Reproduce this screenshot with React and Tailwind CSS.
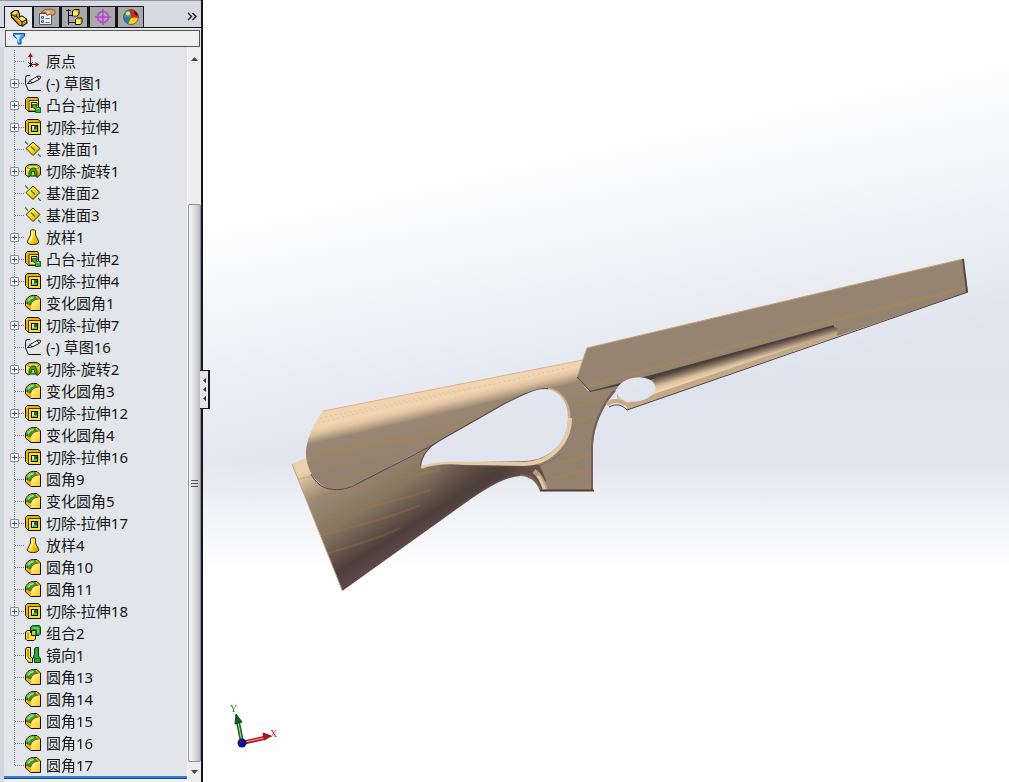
import { useState } from "react";

const FEATURES = [
  { name: "原点", icon: "origin" },
  { name: "(-) 草图1", icon: "sketch", children: true },
  { name: "凸台-拉伸1", icon: "boss", children: true },
  { name: "切除-拉伸2", icon: "cut", children: true },
  { name: "基准面1", icon: "plane" },
  { name: "切除-旋转1", icon: "revolve", children: true },
  { name: "基准面2", icon: "plane" },
  { name: "基准面3", icon: "plane" },
  { name: "放样1", icon: "loft", children: true },
  { name: "凸台-拉伸2", icon: "boss", children: true },
  { name: "切除-拉伸4", icon: "cut", children: true },
  { name: "变化圆角1", icon: "fillet" },
  { name: "切除-拉伸7", icon: "cut", children: true },
  { name: "(-) 草图16", icon: "sketch" },
  { name: "切除-旋转2", icon: "revolve", children: true },
  { name: "变化圆角3", icon: "fillet" },
  { name: "切除-拉伸12", icon: "cut", children: true },
  { name: "变化圆角4", icon: "fillet" },
  { name: "切除-拉伸16", icon: "cut", children: true },
  { name: "圆角9", icon: "fillet" },
  { name: "变化圆角5", icon: "fillet" },
  { name: "切除-拉伸17", icon: "cut", children: true },
  { name: "放样4", icon: "loft" },
  { name: "圆角10", icon: "fillet" },
  { name: "圆角11", icon: "fillet" },
  { name: "切除-拉伸18", icon: "cut", children: true },
  { name: "组合2", icon: "combine" },
  { name: "镜向1", icon: "mirror" },
  { name: "圆角13", icon: "fillet" },
  { name: "圆角14", icon: "fillet" },
  { name: "圆角15", icon: "fillet" },
  { name: "圆角16", icon: "fillet" },
  { name: "圆角17", icon: "fillet" },
];

const ICONS = {
  origin: (
    <>
      <path d="M5.500 3v8.500h8" fill="none" stroke="#a01018" />
      <path d="M5.500 0 8 4H3zM14 11.500 10.500 9v5z" fill="#a01018" />
      <path d="m3 9 5 5M8 9l-5 5M5.500 9v5" stroke="#111" />
    </>
  ),
  sketch: (
    <>
      <path d="M5 .5H1.500L.5 3v6l3 6.500H16" fill="none" stroke="#111" />
      <path d="m2.500 8.500 2.500-3 8-4.500 2.500.5-.5 2.500-8 4z" fill="#f7f7f7" stroke="#111" />
      <path d="m5 5.500 2 2.500M12 1.500l2 2.500" stroke="#111" />
    </>
  ),
  boss: (
    <>
      <path d="M.5 2.500 2.500.5h10l1 2v12h-10l-3-3z" fill="#eeb600" stroke="#111" />
      <path d="M4 3.500h9.500V14H4z" fill="#ffe75e" stroke="#111" strokeWidth=".8" />
      <path d="M6.500 11V5.500H12V9" fill="#fff8c0" stroke="#111" />
      <path d="M7.500 7.500h4v3h4v5h-5V12l-3-1.500z" fill="#3aad42" stroke="#064d0b" strokeWidth=".8" />
      <path d="M11.500 11.500h3" stroke="#a4e79e" />
    </>
  ),
  cut: (
    <>
      <path d="M.5 2.500 2.500.5H13l2.500 2v13h-12l-3-3z" fill="#eeb600" stroke="#111" />
      <path d="M3.500 15V3.500H15" fill="none" stroke="#111" strokeWidth=".8" />
      <path d="M4 4h11v11H4z" fill="#ffde2c" />
      <path d="M6.500 6.500h6v6h-6z" fill="#fff9bd" stroke="#111" strokeWidth="1.200" />
      <path d="M9 7h3v3H9z" fill="#18732a" />
      <path d="M7 12 9 10h3v2z" fill="#52bf55" />
    </>
  ),
  plane: (
    <>
      <path d="m8 1 7 6.500-7 7-7-7z" fill="url(#yellow)" stroke="#3a2c00" />
      <path d="m0 .5 3 3M6 5.500l4 4M13 13l3 3" stroke="#15802a" strokeWidth="1.200" />
    </>
  ),
  revolve: (
    <>
      <path d="M.5 5C.5 0 15.500 0 15.500 5v6.500l-3 2.500-2-1h-5l-2 1-3-2.500z" fill="url(#yellow)" stroke="#111" />
      <path d="M2 4.500c1-3 11-3 12 0L11 6H5z" fill="#ffe75e" stroke="#6b5000" strokeWidth=".7" />
      <path d="M4 14V9l2.500-4H10l2 4v5.500L9.500 11V8.500h-3V11z" fill="#2eaa38" stroke="#064d0b" strokeWidth=".9" />
    </>
  ),
  loft: (
    <>
      <path d="M5.500 1.500c1.500-1 3.500-1 5 0V6l3.500 7-2 1.800c-2.500 1.200-5.500 1.200-8 0L2 13l3.500-7z" fill="url(#yellow)" stroke="#3a2c00" />
      <path d="M7 2.500V7l-2.500 6" stroke="#fff8c0" strokeWidth="1.500" fill="none" />
    </>
  ),
  fillet: (
    <>
      <path d="M.5 7C1 3.500 4 .5 8.500.5H12L15.500 4v11.500H6L.5 11z" fill="#f7b900" stroke="#111" />
      <path d="M6 15V10c1-3 4-5.500 9-5.500V15z" fill="url(#face)" />
      <path d="M1 8C2 4 5 1 10.500 1L12 3.500C8.500 4 6.500 6 5.500 9.500z" fill="#2d9b39" />
      <path d="M3 6.500C4 4.500 6 3 8.500 2.500" stroke="#a4e79e" strokeWidth="1.500" fill="none" />
      <path d="M1 8l4.500 2C6.500 6.500 9.500 4 13.500 4" stroke="#3a2c00" strokeWidth=".8" fill="none" />
    </>
  ),
  combine: (
    <>
      <path d="m5.500 2.500 2-2h7l1 2V9l-1.500 1.500H5.500z" fill="#2fa23a" stroke="#063f0c" />
      <path d="M7.500 3h5.500V8" fill="none" stroke="#9be39a" />
      <path d="m.5 7 2-1.500h3v2h5v6.500l-1.500 1.500H2L.5 14z" fill="#ffe03a" stroke="#111" />
      <path d="M6.500 5.500h4.500v5H6.500z" fill="#b7d44e" stroke="#111" />
      <path d="M3 7.500V14" stroke="#a67d00" />
    </>
  ),
  mirror: (
    <>
      <path d="M.5 1.500 2 .5h3.500V10l2 1v4.500h-4l-1-2-2-2z" fill="#ffe03a" stroke="#111" />
      <path d="M9.500 1.500 11 .5h2.500V9l2 2.500v4h-6V12l-1-1V9l1-1z" fill="#28aa3a" stroke="#063f0c" />
      <path d="M3 2v8.500l3 2M9.500 11.500h5" stroke="#5c4600" strokeWidth=".8" fill="none" />
    </>
  ),
};

function FeatureIcon({ name }) {
  return (
    <svg viewBox="0 0 16 16" className="size-4 shrink-0" aria-hidden="true">
      {ICONS[name]}
    </svg>
  );
}

const TABS = [
  {
    id: "tree",
    label: "FeatureManager",
    art: (
      <>
        <path d="M1 4 4.500 1.500H8L9.500 5v3L12 7l4.500 3 .5 4-4.500 3L9 16 1.500 8z" fill="#e5ae00" stroke="#111" strokeWidth="1.200" />
        <path d="M2.500 4 5 2.500h2L6 5H3.500zM8.500 9.500l3.500-2 3.500 2.500-3 2z" fill="#fff05c" />
        <path d="m2 6 5 2 5 5v3M6 5l1 3M12 13l4-2" stroke="#111" fill="none" />
      </>
    ),
  },
  {
    id: "props",
    label: "PropertyManager",
    art: (
      <>
        <path d="M1.500 5.500h12v11h-12z" fill="#eef1f7" stroke="#555" />
        <path d="M3.500 8.500h2v2h-2zM3.500 12.500h2v2h-2z" fill="#9fc0ee" stroke="#3d63a8" />
        <path d="M7.500 10.500H12M7.500 14.500H12" stroke="#777" />
        <path d="m3 4.500 4-3 6-.5 4 1.500V6l-3 1.500-2-1.500-3 1.500L8 5z" fill="#d9a06c" stroke="#75451e" strokeWidth=".8" />
        <path d="M8 3.500 12 3M9 5l3-.5" stroke="#f6cfa6" />
      </>
    ),
  },
  {
    id: "config",
    label: "ConfigurationManager",
    art: (
      <>
        <path d="M2.500 1v16M2.500 7.500H6M2.500 14.500H9M0 2.500h5" stroke="#111" fill="none" />
        <path d="m6.500 3 1.500-1.500h5v4.500l-1.500 2h-5zM9.500 11.500l1.500-1.500h5v4.500l-1.500 2h-5z" fill="#ffc800" stroke="#111" />
        <path d="M7 3.500h4v4H7zM10 12h4v4h-4z" fill="#fff06a" />
      </>
    ),
  },
  {
    id: "dimx",
    label: "DimXpertManager",
    art: (
      <g fill="none" stroke="#b845d8" strokeWidth="1.500">
        <circle cx="9" cy="9" r="5.500" />
        <path d="M9 1v16M1 9h16" />
      </g>
    ),
  },
  {
    id: "display",
    label: "DisplayManager",
    art: (
      <>
        <circle cx="9" cy="9" r="7.500" fill="#e32219" />
        <path d="M9 10 1.600 9A7.500 7.500 0 0 1 7 1.800C9 4 9.500 7 9 10" fill="#3fa746" />
        <path d="M9 10 1.600 9A7.500 7.500 0 0 0 6 15.800z" fill="#2375d8" />
        <path d="M9 10c3-1 5-1 7.400 0A7.500 7.500 0 0 1 6 15.800z" fill="#f8d41b" />
        <path d="M7 1.800C12 1 16 4 16.400 10c-2-1-5-1-7.400 0 .5-3 0-6-2-8.200" fill="#df241c" />
        <path d="M12 3c3 1 4 3 3.500 5.500-2-1-3.500-3-3.500-5.500" fill="#4c0c0a" />
        <circle cx="6" cy="5.500" r="2" fill="#fff" opacity=".75" />
        <circle cx="9" cy="9" r="7.500" fill="none" stroke="#555" strokeWidth=".8" />
      </>
    ),
  },
];

function ManagerTabs() {
  const [active, setActive] = useState("tree");

  return (
    <div className="flex h-7 items-end border-t border-b border-t-[#8c97ad] border-b-[#15171c] bg-[#d6dae0] pl-1">
      <div className="-mb-px flex" role="tablist">
        {TABS.map((tab) => (
          <button
            key={tab.id}
            type="button"
            role="tab"
            aria-label={tab.label}
            aria-selected={active === tab.id}
            onClick={() => setActive(tab.id)}
            className={
              active === tab.id
                ? "flex h-[22px] w-7 items-center justify-center border-t border-l border-[#15171c] bg-[#e6e9ec]"
                : "flex h-[22px] w-7 items-center justify-center border border-l-2 border-[#15171c] bg-[#a9a9ab]"
            }
          >
            <svg viewBox="0 0 18 18" className="size-[18px]" aria-hidden="true">
              {tab.art}
            </svg>
          </button>
        ))}
      </div>
      <button type="button" aria-label="更多" className="mr-px mb-[3px] ml-auto flex size-4 items-center justify-center">
        <svg viewBox="0 0 10 9" className="h-[9px] w-[10px]" fill="none" stroke="#1b1b1b" strokeWidth="1.400">
          <path d="m1 1 3.500 3.500L1 8M5.500 1 9 4.500 5.500 8" />
        </svg>
      </button>
    </div>
  );
}

function FilterBox() {
  return (
    <label className="mt-[2px] mr-px ml-[5px] flex h-[17px] items-center border border-[#555] bg-[#efefef] pl-[7px]">
      <svg viewBox="0 0 12 12" className="size-3 shrink-0" aria-hidden="true">
        <path d="M.5.5h11V3L8 6.500V11H5V6.500L.5 3z" fill="#3da5f0" stroke="#1149b5" />
        <path d="M2 2h6L6 5.500V10" fill="#c5ecff" />
      </svg>
      <input aria-label="过滤器" className="h-full w-full min-w-0 bg-transparent px-1 text-xs outline-none" />
    </label>
  );
}

function TreeRow({ item, last }) {
  const [open, setOpen] = useState(false);

  return (
    <li className="flex h-[22px] items-center">
      <div className="relative h-[22px] w-5 shrink-0">
        <svg viewBox="0 0 20 22" className="block h-[22px] w-5" stroke="#777" strokeDasharray="1 1" aria-hidden="true">
          <path d={last ? "M9.500 0v11" : "M9.500 0v22"} />
          <path d="M10 11.500h10" />
        </svg>
        {item.children && (
          <button
            type="button"
            aria-label={"展开 " + item.name}
            aria-expanded={open}
            onClick={() => setOpen(!open)}
            className="absolute top-[7px] left-[5px] flex size-[9px] items-center justify-center rounded-[1px] border border-[#929292] bg-[#f7f8f9]"
          >
            <svg viewBox="0 0 5 5" className="size-[5px]" stroke="#3a559f">
              <path d={open ? "M0 2.500h5" : "M0 2.500h5M2.500 0v5"} />
            </svg>
          </button>
        )}
      </div>
      <FeatureIcon name={item.icon} />
      <span className="ml-[5px] whitespace-nowrap">{item.name}</span>
    </li>
  );
}

function ScrollBar() {
  return (
    <div className="flex w-[14px] shrink-0 flex-col border-l border-[#fafafa] bg-[#ededee]">
      <button type="button" aria-label="向上滚动" className="flex h-6 items-center justify-center">
        <svg viewBox="0 0 7 4" className="h-1 w-[7px]">
          <path d="M0 4h7L3.500 0z" fill="#444" />
        </svg>
      </button>
      <div className="h-[133px] shrink-0" />
      <div className="flex flex-1 items-center justify-center rounded-xs border border-[#8f9092] bg-linear-to-r from-[#f7f7f7] via-[#dcdcde] to-[#b9babf]">
        <svg viewBox="0 0 7 8" className="h-2 w-[7px]" stroke="#555">
          <path d="M0 1.500h7M0 4.500h7M0 7.500h7" />
        </svg>
      </div>
      <button type="button" aria-label="向下滚动" className="flex h-5 items-center justify-center">
        <svg viewBox="0 0 7 4" className="h-1 w-[7px]">
          <path d="M0 0h7L3.500 4z" fill="#444" />
        </svg>
      </button>
    </div>
  );
}

function FeaturePanel() {
  return (
    <aside className="relative flex w-[203px] shrink-0 flex-col border-r-2 border-[#15161c] bg-[#e2e6ea]">
      <ManagerTabs />
      <FilterBox />
      <div className="flex flex-1">
        <div className="w-1 shrink-0 bg-[#d2d6dd]" />
        <div className="flex min-w-0 flex-1 flex-col">
          <ul className="flex-1 pt-[3px] pl-px text-[15px] text-[#151515]">
            {FEATURES.map((item, i) => (
              <TreeRow key={item.name} item={item} last={i === FEATURES.length - 1} />
            ))}
          </ul>
          <div className="h-[3px] border-b border-[#33435c] bg-[#2d7fe0]" />
          <div className="h-[3px] bg-[#eef0f3]" />
        </div>
        <ScrollBar />
      </div>
      <button
        type="button"
        aria-label="收起面板"
        className="absolute top-[370px] -right-[9px] flex h-[39px] w-[10px] flex-col items-center justify-center gap-1 border border-r-2 border-l-0 border-[#15161c] bg-[#e2e6ea]"
      >
        {[0, 1, 2].map((n) => (
          <svg key={n} viewBox="0 0 3 5" className="h-[5px] w-[3px]">
            <path d="M3 0v5L0 2.500z" fill="#333" />
          </svg>
        ))}
      </button>
    </aside>
  );
}

function Triad() {
  return (
    <g>
      <path d="m242 742-4-20" stroke="#17691f" strokeWidth="4" />
      <path d="m242 742-4-20" stroke="#a9d8ac" strokeWidth="1" />
      <path d="m236 714 6 8-7 2z" fill="#17601d" stroke="#0d4412" />
      <path d="m242 743 22-5" stroke="#b3161c" strokeWidth="4" />
      <path d="m245 742 19-4" stroke="#f2b0b0" strokeWidth="1" />
      <path d="m271 736-8-3 1.500 7z" fill="#b3161c" stroke="#8c0f14" />
      <circle cx="242" cy="743" r="4.500" fill="#11118c" />
      <text x="230" y="712" fontSize="10" fill="#158a1d" fontFamily="Liberation Serif, serif">
        Y
      </text>
      <text x="270" y="737" fontSize="10" fill="#ee1c24" fontFamily="Liberation Serif, serif">
        X
      </text>
    </g>
  );
}

const CHEEK =
  "M323 411 583 360 577 377 588 391 616 386 616 391C603 406 594 425 593 445L592 470 593 491H541C538 480 532 475 522 475L421 466 425 449C395 462 370 480 355 485C345 490 337 490 330 489C315 484 305 469 306 450C308 434 316 420 323 411Z";
const BUTT =
  "M292 464 306 458C308 473 317 486 330 489C340 491 350 488 357 484L427 448 450 461 530 462 540 466 546 480 541 491C537 479 530 474 520 475C500 478 485 489 472 497L342 590Z";
const GRIP_HOLE =
  "M421 466C423 455 428 448 440 441L505 404C520 397 533 389 545 389C559 390 568 401 568 418C568 441 551 460 525 461L465 462C445 461 431 463 421 466Z";

function Model() {
  return (
    <svg
      viewBox="203 0 806 782"
      preserveAspectRatio="xMinYMin meet"
      className="block h-auto w-full"
      role="img"
      aria-label="木质枪托模型"
    >
      <defs>
        <linearGradient id="yellow" x1="0" y1="0" x2="1" y2="1">
          <stop offset="0" stopColor="#fff49a" />
          <stop offset=".5" stopColor="#ffda22" />
          <stop offset="1" stopColor="#c38c00" />
        </linearGradient>
        <linearGradient id="face" x1="0" y1="0" x2="1" y2="1">
          <stop offset="0" stopColor="#fff9b8" />
          <stop offset="1" stopColor="#ffc70c" />
        </linearGradient>
        <linearGradient id="cheek" gradientUnits="userSpaceOnUse" x1="440" y1="387" x2="453" y2="443">
          <stop offset="0" stopColor="#f0d4b1" />
          <stop offset=".2" stopColor="#f1d5b3" />
          <stop offset=".3" stopColor="#dfc3a1" />
          <stop offset=".46" stopColor="#9a8773" />
          <stop offset="1" stopColor="#938270" />
        </linearGradient>
        <linearGradient id="butt" gradientUnits="userSpaceOnUse" x1="340" y1="450" x2="402" y2="548">
          <stop offset="0" stopColor="#ead0ad" />
          <stop offset=".14" stopColor="#b9a287" />
          <stop offset=".26" stopColor="#9a8874" />
          <stop offset=".55" stopColor="#86755f" />
          <stop offset=".72" stopColor="#695a4e" />
          <stop offset=".88" stopColor="#4c3f3a" />
          <stop offset="1" stopColor="#5e4747" />
        </linearGradient>
        <linearGradient id="neck" gradientUnits="userSpaceOnUse" x1="435" y1="0" x2="546" y2="0">
          <stop offset="0" stopColor="#4c3e38" stopOpacity="0" />
          <stop offset=".6" stopColor="#4c3e38" stopOpacity=".6" />
          <stop offset="1" stopColor="#7b6a5a" stopOpacity=".2" />
        </linearGradient>
        <linearGradient id="channel" gradientUnits="userSpaceOnUse" x1="735" y1="355" x2="739" y2="369">
          <stop offset="0" stopColor="#5b4c44" />
          <stop offset=".3" stopColor="#96826f" />
          <stop offset=".6" stopColor="#dcc09c" />
          <stop offset="1" stopColor="#f5dab6" />
        </linearGradient>
        <mask id="cutouts" maskUnits="userSpaceOnUse" x="203" y="0" width="806" height="782">
          <path d="M203 0h806v782H203z" fill="#fff" />
          <path d={GRIP_HOLE} fill="#000" />
          <ellipse cx="636" cy="389.500" rx="19.500" ry="12" transform="rotate(-9 636 389.500)" fill="#000" />
        </mask>
        <clipPath id="buttClip">
          <path d={BUTT} />
        </clipPath>
        <clipPath id="cheekClip">
          <path d={CHEEK} />
        </clipPath>
      </defs>

      <g mask="url(#cutouts)">
        <path d={CHEEK} fill="url(#cheek)" />
        <g clipPath="url(#cheekClip)" fill="none">
          <path
            d="M306 459C360 443 410 443 455 427S530 407 546 391M574 407 605 398M565 424 598 415M560 463 594 454M550 479 594 467M570 491 594 485"
            stroke="#b28448"
            strokeWidth="2"
            opacity=".5"
          />
          <path d="M308 472C350 462 390 454 430 441M320 484C350 478 375 468 400 458" stroke="#b28448" opacity=".35" />
          <path d="M318 423C390 405 470 390 570 367M320 418C390 404 430 396 470 388" stroke="#dcae70" strokeDasharray="2 3" opacity=".5" />
        </g>

        <path d={BUTT} fill="url(#butt)" />
        <g clipPath="url(#buttClip)" fill="none">
          <path d="M440 463H550V495H480L435 523Z" fill="url(#neck)" />
          <path
            d="M295 481C305 477 312 476 322 474M303 500C350 489 390 482 440 470M310 523C350 511 380 506 430 490M319 536C360 525 390 518 420 505M328 553C350 547 375 540 400 528"
            stroke="#ae8147"
            strokeWidth="2"
            opacity=".25"
          />
        </g>

        <path d="M323 411 583 360" stroke="#e0b681" />
        <path d="M311 474C315 482 322 488 330 489C340 491 350 488 357 484L427 448 505 404" fill="none" stroke="#55443a" />
        <path d="M292 464 342 590" stroke="#bfa386" />
        <path d="M342 590 472 497C490 485 505 476 520 475" fill="none" stroke="#60494a" strokeWidth="2" />
        <path d="M520 475C533 475 538 483 541 491" fill="none" stroke="#7b6858" strokeWidth="2" />
        <path d="M534 471C541 476 543 483 546 491" fill="none" stroke="#b59d82" strokeWidth="5" />
        <path d="M538 476C542 481 543 486 545 491" fill="none" stroke="#dfc4a2" strokeWidth="3" />
        <path d="M421 467C431 463 445 461 465 463L525 464C551 463 570 442 570 418" fill="none" stroke="#e6c9a5" strokeWidth="4" />
        <path d="M480 466 530 467C543 466 553 460 560 454" fill="none" stroke="#6b5a4c" opacity=".5" />
        <path d="M569 418C569 401 559 389 545 389" fill="none" stroke="#ceb18c" strokeWidth="3" />
        <path d="M421 466C423 455 428 448 440 441L505 404C520 397 533 389 548 389" fill="none" stroke="#554238" strokeWidth="2" />
        <path d="M614 391C602 405 593 425 592 445L592 470V491" fill="none" stroke="#795c5b" strokeWidth="2" />
        <path d="M540 490.500H594" stroke="#4d3d38" strokeWidth="2" />

        <path d="M587 348 963 259 968 292 838 336 655 398 617 389 590 392 577 377Z" fill="#958472" />
        <path d="M590 391 655 374 834 325 834 328 655 379 617 386 590 392Z" fill="#4c3e38" />
        <path d="M655 377 832 327C839 326 840 332 835 335L627 409 617 400 617 393C625 402 650 396 655 377Z" fill="url(#channel)" />
        <path d="M627 403 836 333 838 336 627 410Z" fill="#c3a989" />
        <path d="M607 405C612 399 619 400 628 405" fill="none" stroke="#c8ab89" strokeWidth="4" />
        <path d="M609 407C617 403 622 405 627 410L968 292" fill="none" stroke="#4f4038" />
        <path d="M587 386C670 364 750 342 830 321S920 301 966 287" fill="none" stroke="#b28a54" strokeWidth="3" opacity=".4" />
        <path d="M590 375C690 351 780 326 860 313" fill="none" stroke="#a78355" opacity=".25" />
        <path d="M577 377 587 348 963 259" fill="none" stroke="#c69f6c" />
        <path d="m963 259 4 33" stroke="#5b4541" strokeWidth="2" />
        <path d="m577 377 13 14" stroke="#40352f" />
      </g>
      <Triad />
    </svg>
  );
}

export default function App() {
  return (
    <div className="flex min-h-screen bg-white font-['Noto_Sans','Noto_Sans_CJK_SC',sans-serif]">
      <FeaturePanel />
      <main className="min-w-0 flex-1 overflow-hidden bg-[linear-gradient(168deg,#fefefe_24%,#fefefe00_52%),linear-gradient(180deg,#e4e8f1_0%,#dfe3ee_50%,#e2e5ef_59%,#f3f4f8_66%,#fefefe_73%)]">
        <Model />
      </main>
    </div>
  );
}
